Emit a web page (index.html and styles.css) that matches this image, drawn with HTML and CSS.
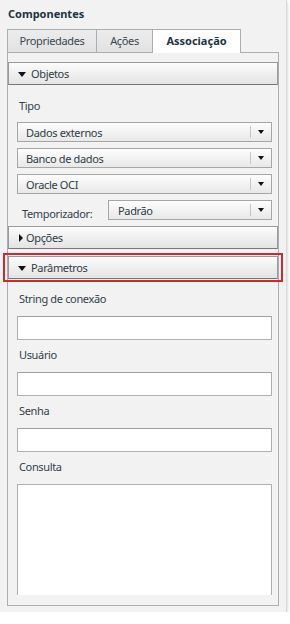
FILE: index.html
```html
<!DOCTYPE html>
<html lang="pt">
<head>
    <meta charset="UTF-8">
    <title>Componentes</title>
    <link rel="stylesheet" href="styles.css">
</head>
<body>
    <div class="panel">
        <h1 class="panel-title">Componentes</h1>

        <div class="tabs">
            <div class="tab">Propriedades</div>
            <div class="tab">Ações</div>
            <div class="tab active">Associação</div>
        </div>

        <div class="tab-content">
            <div class="acc-header open">Objetos</div>
            <div class="acc-body">
                <div class="field-label">Tipo</div>
                <div class="select"><span>Dados externos</span><i class="select-arrow"></i></div>
                <div class="select"><span>Banco de dados</span><i class="select-arrow"></i></div>
                <div class="select"><span>Oracle OCI</span><i class="select-arrow"></i></div>
                <div class="inline-row">
                    <span class="inline-label">Temporizador:</span>
                    <div class="select grow"><span>Padrão</span><i class="select-arrow"></i></div>
                </div>
            </div>

            <div class="acc-header closed">Opções</div>

            <div class="acc-header open highlighted">Parâmetros</div>
            <div class="acc-body params">
                <div class="field-label">String de conexão</div>
                <div class="text-input"></div>
                <div class="field-label">Usuário</div>
                <div class="text-input"></div>
                <div class="field-label">Senha</div>
                <div class="text-input"></div>
                <div class="field-label">Consulta</div>
                <div class="text-area"></div>
            </div>
        </div>
    </div>
</body>
</html>
```

FILE: styles.css
```css
* {
    margin: 0;
    padding: 0;
    box-sizing: border-box;
}

body {
    font-family: 'Noto Sans', 'Open Sans', 'DejaVu Sans', sans-serif;
    font-size: 11px;
    letter-spacing: -0.35px;
    color: #33414b;
    background: #ffffff;
}

.panel {
    width: 287px;
    height: 612px;
    padding: 6px 8px 0 7px;
    background: #f2f2f2;
    border-right: 1px solid #d9d9d9;
    box-shadow: 0 2px 3px rgba(0, 0, 0, 0.25);
}

.panel-title {
    font-size: 11px;
    font-weight: bold;
    line-height: 15px;
    letter-spacing: 0;
    color: #1c3444;
    padding-left: 1px;
    margin-bottom: 8px;
}

.tabs {
    display: flex;
    height: 23px;
    position: relative;
    z-index: 1;
}

.tab {
    height: 23px;
    line-height: 21px;
    text-align: center;
    color: #3a4650;
    border: 1px solid #a9aeb3;
    border-bottom: none;
    background: linear-gradient(#ececec, #e2e2e2);
}

.tab:nth-child(1) {
    width: 90px;
}

.tab:nth-child(2) {
    width: 56px;
    border-left: none;
}

.tab.active {
    width: 88px;
    height: 24px;
    border-left: none;
    background: #ffffff;
    font-weight: bold;
    letter-spacing: 0;
    color: #1c3444;
}

.tab-content {
    width: 272px;
    height: 554px;
    border: 1px solid #a9aeb3;
    padding-top: 9px;
    background: #f2f2f2;
}

.acc-header {
    position: relative;
    height: 23px;
    line-height: 21px;
    padding-left: 22px;
    color: #2e3c46;
    border: 1px solid #9a9a9a;
    border-bottom-color: #777777;
    background: linear-gradient(#fbfbfb, #e4e4e4);
}

.acc-header::before {
    content: '';
    position: absolute;
    top: 9px;
    left: 9px;
    border-style: solid;
}

.acc-header.open::before {
    border-width: 5px 4px 0 4px;
    border-color: #111111 transparent transparent transparent;
}

.acc-header.closed::before {
    top: 7px;
    left: 10px;
    border-width: 4px 0 4px 4px;
    border-color: transparent transparent transparent #111111;
}

.acc-header.closed {
    padding-left: 17px;
}

.acc-header.highlighted {
    margin-top: 7px;
}

.highlighted::after {
    content: '';
    position: absolute;
    top: -4px;
    bottom: -4px;
    left: -6px;
    right: -6px;
    border: 2px solid #d3262d;
}

.acc-body {
    padding: 13px 6px 0 9px;
}

.field-label {
    line-height: 16px;
    padding-left: 2px;
    margin-bottom: 8px;
}

.select {
    position: relative;
    display: flex;
    align-items: center;
    height: 20px;
    padding-left: 8px;
    margin-bottom: 6px;
    border: 1px solid #a6a6a6;
    background: linear-gradient(#fdfdfd, #e8e8e8);
    color: #2e3c46;
}

.select span {
    flex: 1;
}

.select-arrow {
    width: 21px;
    height: 12px;
    border-left: 1px solid #c4c4c4;
    position: relative;
}

.select-arrow::after {
    content: '';
    position: absolute;
    top: 4px;
    left: 7px;
    border-style: solid;
    border-width: 4px 3.5px 0 3.5px;
    border-color: #111111 transparent transparent transparent;
}

.inline-row {
    display: flex;
    align-items: center;
    gap: 13px;
    padding-left: 5px;
}

.inline-label {
    width: 73px;
}

.select.grow {
    flex: 1;
    padding-left: 9px;
}

.params {
    padding-top: 12px;
}

.params .field-label {
    margin-bottom: 9px;
}

.text-input {
    height: 24px;
    margin-bottom: 7px;
    background: #ffffff;
    border: 1px solid #abb1b7;
    border-top-color: #9aa0a6;
}

.text-area {
    height: 111px;
    background: #ffffff;
    border: 1px solid #abb1b7;
    border-bottom: none;
}
```
